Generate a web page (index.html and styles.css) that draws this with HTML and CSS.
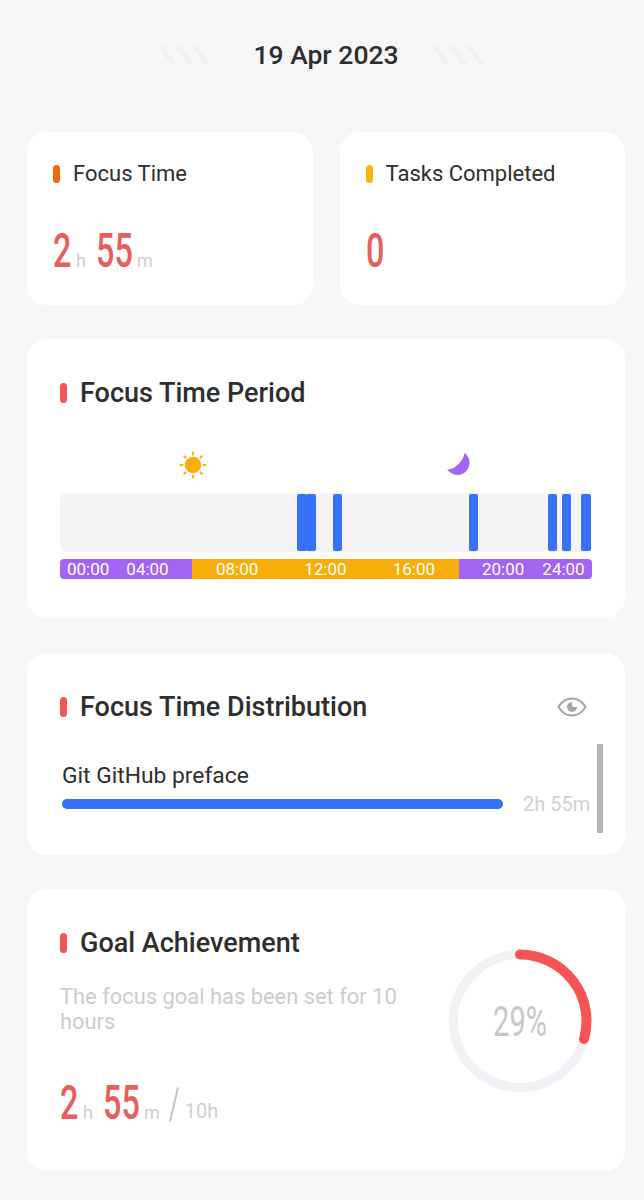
FILE: index.html
```html
<!DOCTYPE html>
<html lang="en">
<head>
  <meta charset="UTF-8">
  <title>Focus Statistics</title>
  <link rel="stylesheet" href="styles.css">
</head>
<body>

  <div class="header">
    <div class="hatch"><i></i><i></i><i></i></div>
    <h1>19 Apr 2023</h1>
    <div class="hatch"><i></i><i></i><i></i></div>
  </div>

  <div class="stats">
    <div class="card stat">
      <div class="stat-label"><span class="dot orange"></span>Focus Time</div>
      <div class="amount">
        <span class="num w1">2</span><span class="unit">h</span>
        <span class="num w2">55</span><span class="unit">m</span>
      </div>
    </div>
    <div class="card stat">
      <div class="stat-label"><span class="dot yellow"></span>Tasks Completed</div>
      <div class="amount">
        <span class="num w1">0</span>
      </div>
    </div>
  </div>

  <div class="card period">
    <h2><span class="dot red"></span>Focus Time Period</h2>
    <div class="icons">
      <svg class="sun" width="28" height="28" viewBox="0 0 28 28">
        <circle cx="14" cy="14" r="8.200" fill="#f8ae0a"/>
        <g stroke="#f8ae0a" stroke-width="2" stroke-linecap="round">
          <path d="M14 1.500v2M14 24.500v2M1.500 14h2M24.500 14h2M5.200 5.200l1.400 1.400M21.400 21.400l1.400 1.400M5.200 22.800l1.400-1.400M21.400 6.600l1.400-1.400"/>
        </g>
      </svg>
      <svg class="moon" width="26" height="26" viewBox="0 0 26 26">
        <path d="M18.500 1C22 3.500 23.700 7 23.500 11 23.200 18 17.500 23 12 23 8 23 4 21 1 17.500 6 17.500 9.500 15 12.500 12 15.500 9 18 5 18.500 1Z" fill="#a463f2"/>
      </svg>
    </div>
    <div class="track">
      <span class="bar" style="left: 237px; width: 10px"></span>
      <span class="bar" style="left: 246px; width: 10px"></span>
      <span class="bar" style="left: 273px; width: 9px"></span>
      <span class="bar" style="left: 409px; width: 9px"></span>
      <span class="bar" style="left: 488px; width: 9px"></span>
      <span class="bar" style="left: 502px; width: 9px"></span>
      <span class="bar" style="left: 521px; width: 10px"></span>
    </div>
    <div class="axis">
      <div class="seg night first"><span>00:00</span><span>04:00</span></div>
      <div class="seg day"><span>08:00</span><span>12:00</span><span>16:00</span></div>
      <div class="seg night last"><span>20:00</span><span>24:00</span></div>
    </div>
  </div>

  <div class="card dist">
    <div class="dist-head">
      <h2><span class="dot red"></span>Focus Time Distribution</h2>
      <svg class="eye" width="30" height="22" viewBox="0 0 30 22">
        <path d="M1.500 11C5 5 9.500 2.500 15 2.500S25 5 28.500 11C25 17 20.500 19.500 15 19.500S5 17 1.500 11Z" fill="none" stroke="#a6a6a6" stroke-width="2"/>
        <path d="M15 6a5 5 0 1 0 5 5h-3.500a1.500 1.500 0 0 1-1.500-1.500Z" fill="#a6a6a6"/>
      </svg>
    </div>
    <div class="task-name">Git GitHub preface</div>
    <div class="task-row">
      <div class="task-bar"></div>
      <span class="task-time">2h 55m</span>
    </div>
    <div class="scrollbar"></div>
  </div>

  <div class="card goal">
    <div class="goal-text">
      <h2><span class="dot red"></span>Goal Achievement</h2>
      <p>The focus goal has been set for 10 hours</p>
      <div class="amount">
        <span class="num w1">2</span><span class="unit">h</span>
        <span class="num w2">55</span><span class="unit">m</span>
        <span class="slash"></span><span class="target">10h</span>
      </div>
    </div>
    <div class="ring">
      <svg width="144" height="144" viewBox="0 0 144 144">
        <circle cx="72" cy="72" r="66.500" fill="none" stroke="#f1f1f6" stroke-width="9"/>
        <path d="M72 5.500A66.500 66.500 0 0 1 136 90" fill="none" stroke="#f75555" stroke-width="10" stroke-linecap="round"/>
      </svg>
      <span class="ring-label">29%</span>
    </div>
  </div>

</body>
</html>
```

FILE: styles.css
```css
body {
  margin: 0;
  padding: 0 19px 0 27px;
  background: #f7f7f9;
  font-family: Roboto, sans-serif;
  color: #2e2e2e;
}
h1, h2, p {
  margin: 0;
}
.header {
  height: 132px;
  padding-bottom: 22px;
  box-sizing: border-box;
  display: flex;
  align-items: center;
  justify-content: center;
  gap: 39px;
}
.header h1 {
  font-size: 26.500px;
  font-weight: 500;
  line-height: 30px;
}
.hatch {
  display: flex;
  gap: 11px;
  width: 50px;
}
.hatch i {
  flex: none;
  width: 6px;
  height: 18px;
  background: #f1f1f4;
  transform: skewX(35deg);
}
.card {
  background: #fff;
  border-radius: 20px;
  margin-bottom: 34px;
  position: relative;
}
.dot {
  display: inline-block;
  width: 7px;
  height: 18px;
  border-radius: 4px;
  margin-right: 13px;
}
.orange { background: #f2690d; }
.yellow { background: #f8b40e; }
.red { background: #f75555; }

.stats {
  display: flex;
  gap: 27px;
}
.stat {
  flex: 1;
  height: 173px;
  padding: 26px 0 0 26px;
  box-sizing: border-box;
}
.stat-label {
  display: flex;
  align-items: center;
  font-size: 22px;
  line-height: 32px;
  font-weight: 400;
}
.stat .amount {
  margin-top: 36px;
}
.amount {
  display: flex;
  align-items: flex-end;
  height: 50px;
}
.num {
  display: inline-block;
  font-size: 49px;
  font-weight: 500;
  line-height: 50px;
  color: #e85d5d;
  transform: scaleX(0.66);
  transform-origin: left;
}
.num.w1 { width: 19px; }
.num.w2 { width: 37px; margin-left: 10px; }
.unit {
  font-size: 18px;
  line-height: 20px;
  margin: 0 0 5px 4px;
  color: #cfcfcf;
}
.card h2 {
  display: flex;
  align-items: center;
  font-size: 27px;
  font-weight: 500;
  line-height: 32px;
}
.card h2 .dot {
  height: 20px;
}

.period {
  height: 279px;
  margin-bottom: 35px;
  padding: 38px 33px 0 33px;
  box-sizing: border-box;
}
.icons {
  height: 75px;
  margin-top: 9px;
  position: relative;
}
.sun {
  position: absolute;
  left: 119px;
  top: 33px;
}
.moon {
  position: absolute;
  left: 386px;
  top: 34px;
}
.track {
  height: 59px;
  background: #f5f5f8;
  border-radius: 6px;
  position: relative;
}
.bar {
  position: absolute;
  top: 1px;
  bottom: 1px;
  background: #3572f5;
  border-radius: 2px;
}
.axis {
  display: flex;
  height: 20px;
  margin-top: 7px;
  color: #fff;
  font-size: 17px;
  line-height: 21px;
}
.seg {
  display: flex;
  box-sizing: border-box;
}
.night { background: #a463f2; }
.day { background: #f8ae0a; }
.first {
  width: 132px;
  padding-left: 7px;
  gap: 17px;
  border-radius: 4px 0 0 4px;
}
.seg.day {
  width: 267px;
  padding-left: 24px;
  gap: 46px;
}
.last {
  width: 133px;
  padding-left: 23px;
  gap: 18px;
  border-radius: 0 4px 4px 0;
}

.dist {
  height: 202px;
  padding: 38px 0 0 33px;
  box-sizing: border-box;
}
.dist-head {
  display: flex;
  justify-content: space-between;
  align-items: center;
  padding-right: 38px;
}
.task-name {
  margin: 39px 0 0 2px;
  font-size: 22.800px;
  line-height: 28px;
}
.task-row {
  display: flex;
  align-items: center;
  margin: 2px 0 0 2px;
}
.task-bar {
  width: 441px;
  height: 10px;
  background: #3572f5;
  border-radius: 5px;
}
.task-time {
  margin-left: 20px;
  font-size: 20px;
  color: #cfcfcf;
}
.scrollbar {
  position: absolute;
  right: 22px;
  top: 91px;
  width: 6px;
  height: 89px;
  background: #b5b5b5;
}

.goal {
  height: 282px;
  display: flex;
  justify-content: space-between;
  padding: 38px 33px 0 33px;
  box-sizing: border-box;
}
.goal-text {
  width: 350px;
}
.goal p {
  margin-top: 25px;
  font-size: 21.900px;
  line-height: 25px;
  color: #cccccc;
}
.goal .amount {
  margin-top: 44px;
  height: 50px;
}
.slash {
  width: 2px;
  height: 35px;
  margin: 0 0 6px 13px;
  background: #c4c4c4;
  transform: rotate(13deg);
}
.target {
  margin: 0 0 5px 10px;
  font-size: 20px;
  line-height: 24px;
  color: #cfcfcf;
}
.ring {
  width: 144px;
  height: 144px;
  margin-top: 22px;
  position: relative;
}
.ring-label {
  position: absolute;
  inset: 0;
  display: flex;
  align-items: center;
  justify-content: center;
  font-size: 42px;
  color: #c8c8c8;
  transform: scaleX(0.69);
}
```
